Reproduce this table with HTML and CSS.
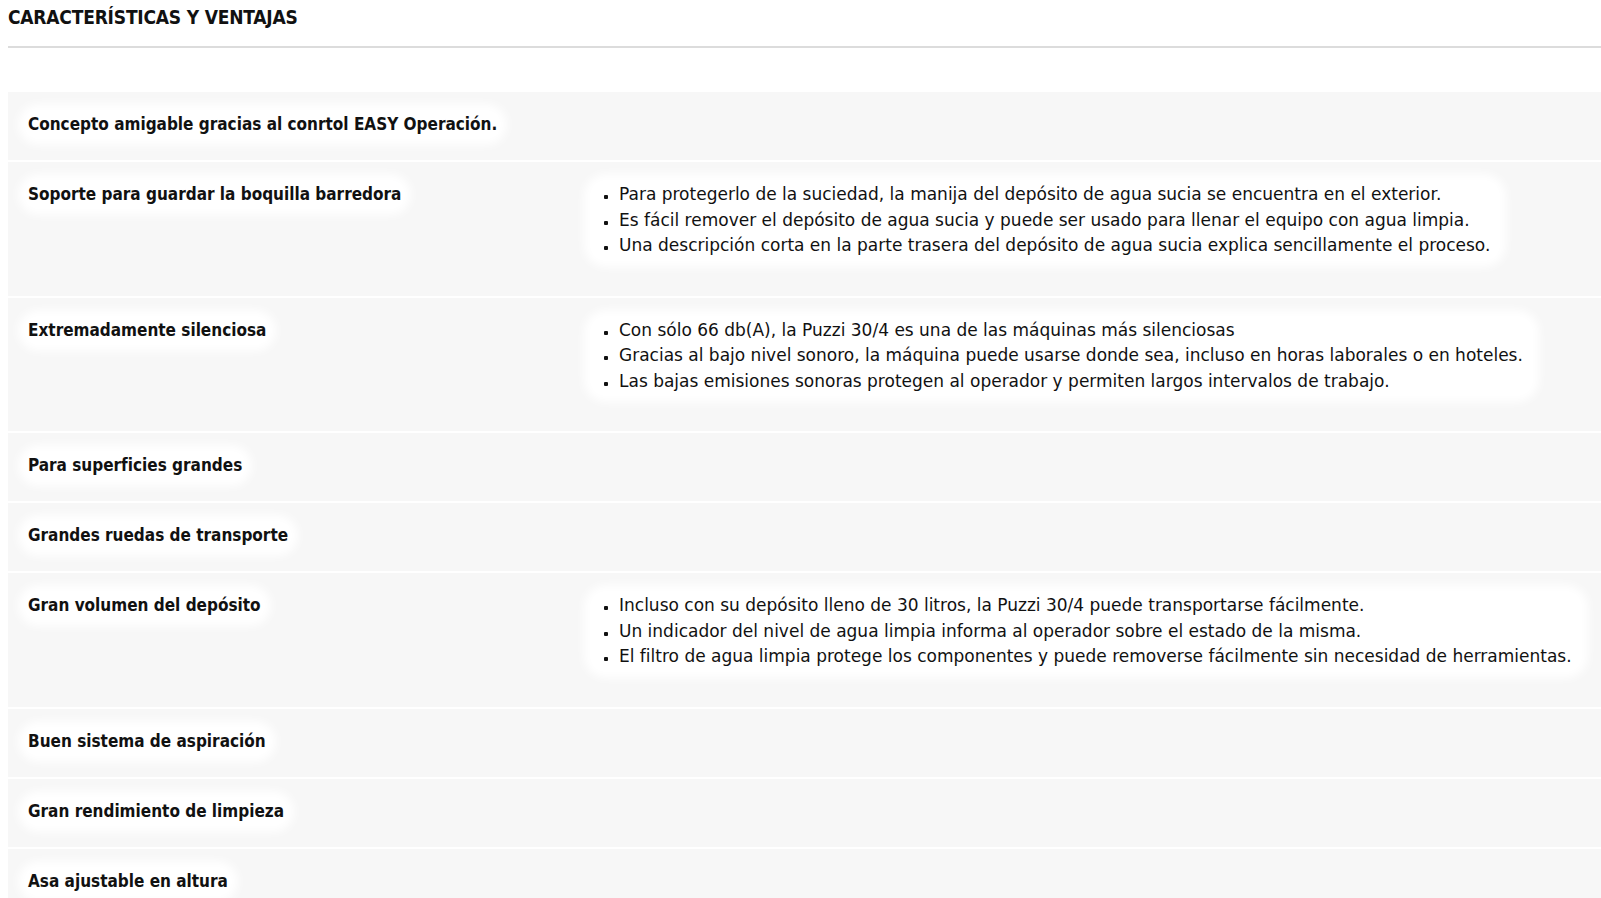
FILE: index.html
```html
<!DOCTYPE html>
<html lang="es">

<head>
    <meta charset="UTF-8">
    <meta name="viewport" content="width=device-width, initial-scale=1.0">
    <title>Características y ventajas</title>
    <link rel="stylesheet" href="styles.css">
</head>

<body>
    <h2 class="title">Características y ventajas</h2>

    <div class="features">
        <div class="feature">
            <div class="label"><span>Concepto amigable gracias al conrtol EASY Operación.</span></div>
        </div>
        <div class="feature">
            <div class="label"><span>Soporte para guardar la boquilla barredora</span></div>
            <ul class="details">
                <li>Para protegerlo de la suciedad, la manija del depósito de agua sucia se encuentra en el exterior.</li>
                <li>Es fácil remover el depósito de agua sucia y puede ser usado para llenar el equipo con agua limpia.</li>
                <li>Una descripción corta en la parte trasera del depósito de agua sucia explica sencillamente el proceso.</li>
            </ul>
        </div>
        <div class="feature">
            <div class="label"><span>Extremadamente silenciosa</span></div>
            <ul class="details">
                <li>Con sólo 66 db(A), la Puzzi 30/4 es una de las máquinas más silenciosas</li>
                <li>Gracias al bajo nivel sonoro, la máquina puede usarse donde sea, incluso en horas laborales o en hoteles.</li>
                <li>Las bajas emisiones sonoras protegen al operador y permiten largos intervalos de trabajo.</li>
            </ul>
        </div>
        <div class="feature">
            <div class="label"><span>Para superficies grandes</span></div>
        </div>
        <div class="feature">
            <div class="label"><span>Grandes ruedas de transporte</span></div>
        </div>
        <div class="feature">
            <div class="label"><span>Gran volumen del depósito</span></div>
            <ul class="details">
                <li>Incluso con su depósito lleno de 30 litros, la Puzzi 30/4 puede transportarse fácilmente.</li>
                <li>Un indicador del nivel de agua limpia informa al operador sobre el estado de la misma.</li>
                <li>El filtro de agua limpia protege los componentes y puede removerse fácilmente sin necesidad de herramientas.</li>
            </ul>
        </div>
        <div class="feature">
            <div class="label"><span>Buen sistema de aspiración</span></div>
        </div>
        <div class="feature">
            <div class="label"><span>Gran rendimiento de limpieza</span></div>
        </div>
        <div class="feature">
            <div class="label"><span>Asa ajustable en altura</span></div>
        </div>
    </div>
</body>

</html>
```

FILE: styles.css
```css
body {
    background-color: #fff;
    margin: 0 0 0 8px;
    padding: 0;
    color: #111;
    font-family: "DejaVu Sans Condensed", "Liberation Sans Narrow", "DejaVu Sans", sans-serif;
    font-stretch: condensed;
    overflow: hidden;
}

.title {
    margin: 0;
    padding-top: 6px;
    height: 48px;
    box-sizing: border-box;
    font-size: 19px;
    line-height: 22px;
    font-weight: bold;
    text-transform: uppercase;
    letter-spacing: -0.2px;
    border-bottom: 2px solid #dcdcdc;
}

.features {
    margin-top: 44px;
}

.feature {
    display: grid;
    grid-template-columns: 584px 1fr;
    align-items: start;
    background-color: #f7f7f7;
    padding: 20px 0 23px 0;
    margin-bottom: 2px;
}

.label {
    padding-left: 18px;
    font-size: 17px;
    line-height: 25px;
    font-weight: bold;
}

.label span,
.details {
    background-color: #fff;
    border-radius: 14px;
    box-shadow: 0 0 10px 8px #fff;
}

.label span {
    display: inline-block;
    padding: 0 2px;
}

.details {
    justify-self: start;
    list-style: none;
    margin: 0 0 14px 0;
    padding: 0 8px 0 27px;
    font-family: "DejaVu Sans", sans-serif;
    font-stretch: normal;
    font-size: 17px;
    line-height: 25.5px;
}

.details li {
    position: relative;
}

.details li::before {
    content: "";
    position: absolute;
    left: -15px;
    top: 13px;
    width: 4px;
    height: 4px;
    border-radius: 1px;
    background-color: #111;
}
```
